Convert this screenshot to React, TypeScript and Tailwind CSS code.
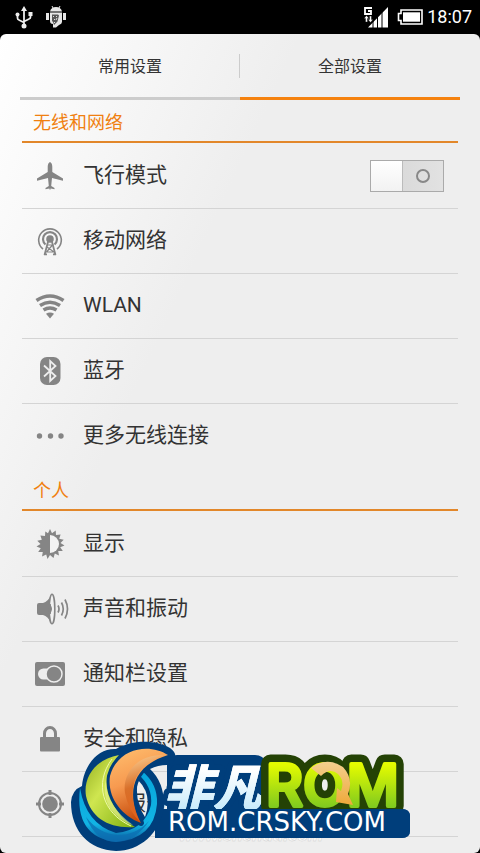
import React from "react";

const Plane = () => (
  <svg viewBox="0 0 32 32" className="size-8" fill="#858585">
    <path d="M16 2q-2.300 1-2.300 5v5L3 18.500v2.300l11-2.800.8 8-3.300 2v1.300l3.800-.8.7 1.800.7-1.800 3.800.8V28l-3.300-2 .8-8 11 2.800v-2.300L18.300 12V7q0-4-2.300-5z" />
  </svg>
);
const Tower = () => (
  <svg viewBox="0 0 32 32" className="size-8" fill="none" stroke="#858585" strokeWidth="2.200">
    <path d="M9 24a11.300 11.300 0 1 1 14 0" strokeWidth="1.600" />
    <path d="M11.500 19.500a7 7 0 1 1 9 0" />
    <circle cx="16" cy="14" r="3.800" fill="#858585" stroke="none" />
    <path d="M14.500 15l-4 15M17.500 15l4 15M10 29.300h3M19 29.300h3" strokeWidth="1.800" />
    <path d="M13.500 20h5l-6 7M13 22l7 5M11 27h10" strokeWidth="1.200" />
  </svg>
);
const Wifi = () => (
  <svg viewBox="0 0 32 32" className="size-8" fill="none" stroke="#858585" strokeWidth="3.600">
    <path d="M2.500 10.500Q16 1.500 29.500 10.500M6 15.500Q16 9 26 15.500M9.500 20Q16 16 22.500 20" />
    <path d="M12 23.800q4-2.500 8 0L16 28.500z" fill="#858585" stroke="none" />
  </svg>
);
const Bluetooth = () => (
  <svg viewBox="0 0 32 32" className="size-8">
    <rect x="6" y="2" width="20.500" height="28" rx="7" fill="#858585" />
    <path d="M10 10.500l11.500 10.500-5.300 5V6l5.300 5L10 21.500" fill="none" stroke="#eee" strokeWidth="1.800" />
  </svg>
);
const Dots = () => (
  <svg viewBox="0 0 32 32" className="size-8" fill="#858585">
    <circle cx="5.500" cy="16" r="2.700" /><circle cx="16.500" cy="16" r="2.700" /><circle cx="27" cy="16" r="2.700" />
  </svg>
);
const Brightness = () => (
  <svg viewBox="0 0 32 32" className="size-8" fill="#858585">
    <path d="M16 1l2 4.200 3.700-2.700.3 4.600 4.600-.700-1.400 4.400 4.500 1-3.200 3.200 4 2.500-4.300 1.700 2.600 3.800-4.600-.1.800 4.600-4.200-2-1.300 4.400L16 27l-2.500 3.900-1.300-4.400-4.200 2 .8-4.600-4.600.1 2.600-3.800-4.300-1.700 4-2.500-3.200-3.200 4.500-1-1.400-4.400 4.600.7.300-4.600L14 5.200z" />
    <path d="M16 7a9 9 0 0 1 0 18z" fill="#f3f3f3" />
  </svg>
);
const Speaker = () => (
  <svg viewBox="0 0 36 32" className="h-8 w-9" fill="none" stroke="#858585">
    <path d="M3 12q0-2 2-2h4q5-1 8.500-9v30q-3.500-8-8.500-9H5q-2 0-2-2z" fill="#858585" stroke="none" />
    <ellipse cx="18" cy="16" rx="2.800" ry="14.800" fill="#f2f2f2" strokeWidth="1.600" />
    <path d="M16 11q3 5 0 10z" fill="#858585" />
    <path d="M24 12.500q2 3.500 0 7M27.500 9.500q3.500 6.500 0 13M31 6.500q5 9.500 0 19" strokeWidth="1.700" />
  </svg>
);
const Panel = () => (
  <svg viewBox="0 0 32 32" className="size-8">
    <rect x="1" y="4" width="30" height="24" rx="2" fill="#858585" />
    <path d="M18 10.500H9.500a5.500 5.500 0 0 0 0 11H18z" fill="#eee" />
    <circle cx="20" cy="16" r="8" fill="#858585" stroke="#eee" strokeWidth="1.500" />
  </svg>
);
const Lock = () => (
  <svg viewBox="0 0 32 32" className="size-8">
    <rect x="6" y="14" width="20" height="14.500" rx="1" fill="#858585" />
    <path d="M10.500 15v-4.500a5.500 6 0 0 1 11 0V15" fill="none" stroke="#858585" strokeWidth="3" />
  </svg>
);
const Target = () => (
  <svg viewBox="0 0 32 32" className="size-8" fill="none" stroke="#858585" strokeWidth="2">
    <circle cx="16" cy="16" r="11" />
    <circle cx="16" cy="16" r="7.800" fill="#858585" stroke="none" />
    <path d="M16 2v5M16 25v5M2 16h5M25 16h5" strokeWidth="3" />
  </svg>
);

type Item = { label: string; Icon: () => React.JSX.Element; toggle?: boolean };

const wireless: Item[] = [
  { label: "飞行模式", Icon: Plane, toggle: true },
  { label: "移动网络", Icon: Tower },
  { label: "WLAN", Icon: Wifi },
  { label: "蓝牙", Icon: Bluetooth },
  { label: "更多无线连接", Icon: Dots },
];
const personal: Item[] = [
  { label: "显示", Icon: Brightness },
  { label: "声音和振动", Icon: Speaker },
  { label: "通知栏设置", Icon: Panel },
  { label: "安全和隐私", Icon: Lock },
  { label: "定位服务", Icon: Target },
];

function Section({ title, items, closed }: { title: string; items: Item[]; closed?: boolean }) {
  return (
    <section className="mx-0.5">
      <h2 className="flex h-[43px] items-center border-b-2 border-[#e2872a] pt-1 pl-[11px] text-lg text-[#f08010]">{title}</h2>
      <ul className="pt-px">
        {items.map(({ label, Icon, toggle }, i) => (
          <li key={label} className={closed || i < items.length - 1 ? "border-b border-[#d4d4d4]" : ""}>
            {toggle ? (
              <label className="flex h-16 items-center pr-3.5 pl-3">
                <span className="flex w-[49px]"><Icon /></span>
                <span className="flex-1 text-[21px]">{label}</span>
                <input type="checkbox" className="peer sr-only" />
                <span className="flex h-8 w-[74px] border border-[#aaa] bg-linear-to-r from-[#d4d4d4] to-[#e2e2e2]">
                  <span className="w-8 border-r border-[#bbb] bg-linear-to-b from-white to-[#f2f2f2]" />
                  <span className="flex flex-1 items-center justify-center">
                    <span className="size-3.5 rounded-full border-2 border-[#888]" />
                  </span>
                </span>
              </label>
            ) : (
              <button type="button" className="flex h-16 w-full items-center pl-3 text-left">
                <span className="flex w-[49px]"><Icon /></span>
                <span className="text-[21px]">{label}</span>
              </button>
            )}
          </li>
        ))}
      </ul>
    </section>
  );
}

function StatusBar() {
  return (
    <header className="flex h-[34px] shrink-0 items-center bg-black pr-2 pl-3 text-white">
      <svg viewBox="0 0 24 24" className="size-6" fill="none" stroke="#eee" strokeWidth="1.800">
        <path d="M12 4v17M5.500 10v3q0 1.500 1.500 2l5 2.500M18.500 9.500V12q0 1.500-1.500 2l-5 2.500" />
        <path d="M12 1l3 5H9z" fill="#eee" stroke="none" />
        <circle cx="12" cy="21" r="2.500" fill="#eee" stroke="none" />
        <circle cx="5.500" cy="9.500" r="2" fill="#eee" stroke="none" />
        <path d="M16.500 7h4v4h-4z" fill="#eee" stroke="none" />
      </svg>
      <svg viewBox="0 0 24 24" className="ml-2 size-6" fill="#e6e6e6">
        <path d="M6 6.500q1-4.500 6-4.500t6 4.500zM6 7.500h12V17q0 2-3 3l-3 2.500H9V19q-3 0-3-3zM2 8h3v7H2zM19 8h3v7h-3z" />
        <path d="M8 1l1.500 3M16 1l-1.500 3" stroke="#e6e6e6" />
        <path d="M8 9.500h6l1 1-1.500 6L10 20l-1-3-1-1z" fill="#555" />
        <path d="M9 11l1 1M12 11l1 1M10 14l1 1M13 13l-1 2M11 17l-1 1" stroke="#ddd" />
      </svg>
      <div className="ml-auto flex items-center">
        <svg viewBox="0 0 26 22" className="h-[22px] w-[26px]" fill="#fff">
          <path d="M9 2H2v6h6V5H5" fill="none" stroke="#fff" strokeWidth="1.800" />
          <path d="M5 21.500L25 1v20.500z" />
          <path d="M10 9v13M14.500 8v14M19 3v19" stroke="#000" />
          <path d="M3.500 9.500L6 12.500H4.500V16h-2v-3.500H1zM6.500 10h2v3.500H10l-2.500 3-2.500-3h1.500z" stroke="#000" strokeWidth=".4" />
        </svg>
        <svg viewBox="0 0 26 16" className="ml-2 h-4 w-[26px]">
          <path d="M4 1h21v14H4v-3.500H1.500v-7H4z" fill="none" stroke="#fff" strokeWidth="1.600" />
          <path d="M6 3.300h17v9.400H6z" fill="#fff" />
        </svg>
        <time className="ml-1 font-[Roboto] text-lg">18:07</time>
      </div>
    </header>
  );
}

function Logo() {
  return (
    <svg viewBox="0 0 340 114" className="absolute bottom-0 left-[71px] h-[114px] w-[340px]" role="img" aria-label="非凡ROM">
      <defs>
        <linearGradient id="lime" x2="1" y2="1"><stop stopColor="#93ae20" /><stop offset=".4" stopColor="#cfe650" /><stop offset="1" stopColor="#7fb010" /></linearGradient>
        <linearGradient id="orange" x2=".3" y2="1"><stop stopColor="#ffc070" /><stop offset=".5" stopColor="#f79a50" /><stop offset="1" stopColor="#c64c0c" /></linearGradient>
        <linearGradient id="inner" x2=".2" y2="1"><stop stopColor="#ffd79a" /><stop offset=".5" stopColor="#d9702a" /><stop offset="1" stopColor="#e0601a" /></linearGradient>
        <linearGradient id="blue" x2="0" y2="1"><stop stopColor="#06a5dc" /><stop offset=".75" stopColor="#12b4e4" /><stop offset="1" stopColor="#0c5a9c" /></linearGradient>
        <linearGradient id="green" x2="0" y2="1"><stop offset=".2" stopColor="#e4fb00" /><stop offset="1" stopColor="#62bb28" /></linearGradient>
        <linearGradient id="ice" x2="0" y2="1"><stop offset=".3" stopColor="#fff" /><stop offset="1" stopColor="#b9e5fa" /></linearGradient>
        <linearGradient id="gold" x2="0" y2="1"><stop stopColor="#f3cf8e" /><stop offset="1" stopColor="#efa93a" /></linearGradient>
      </defs>
      <text x="108" y="102" fontSize="17" fill="#fafafa" stroke="#ccc" strokeWidth=".4" fontStyle="italic" fontFamily="Liberation Sans, sans-serif" fontWeight="700">www.shendu.com</text>
      <path d="M84 70h12V22q2-6 10-6h78q8 0 12 8v46h135q8 0 8 7v15q0 7-8 7H84z" fill="#003e7b" />
      <path fillRule="evenodd" d="M0 63Q1 51 11 47C13 26 27 9 45 10 60 1 84 0 99 9q7 5 5 11-2 6-8 6-9 0-17 4Q93 43 93 66C90 95 68 112 45 112 18 111 0 92 0 63zM67 41Q82 56 74 78 63 62 67 41z" fill="#003e7b" />
      <path d="M9 49Q15 85 45 94 74 91 80 66 82 48 67 35q2-4 4-3 16 13 15 33-3 35-41 38Q3 98 9 49z" fill="url(#blue)" />
      <path d="M15 78q13 17 32 18 18 0 31-14-12 19-33 21-20 0-30-25z" fill="#0c6fb2" fillOpacity=".75" />
      <path d="M48 16C24 20 12 39 15 57c5 22 23 33 49 31C42 76 26 44 48 16z" fill="url(#lime)" />
      <path d="M41 20C23 44 31 74 60 87" fill="none" stroke="#eefaaa" strokeWidth="1" />
      <path d="M35 40q-1 26 27 46-13-3-24-18-7-14-3-28z" fill="#eef6a0" fillOpacity=".55" />
      <path d="M97 16C79 4 47 8 39 37c-3 20 10 39 31 47C56 58 58 28 97 16z" fill="url(#orange)" stroke="#003e7b" strokeWidth="6" paintOrder="stroke" strokeLinejoin="round" />
      <path d="M93 16C66 15 51 35 54 54q3 17 15 29C56 58 58 28 93 16z" fill="url(#inner)" />
      <g fontFamily="Noto Sans CJK SC, sans-serif" fontWeight="900" fontStyle="italic" fontSize="49" strokeLinejoin="round">
        <text x="93" y="67" fill="url(#ice)" stroke="#003e7b" strokeWidth="11" paintOrder="stroke">非凡</text>
        <text x="93" y="67" fill="url(#ice)">非凡</text>
      </g>
      <g fontFamily="Inter, sans-serif" fontWeight="500" fontSize="57" strokeLinejoin="round">
        <text x="195" y="67" fill="#244205" stroke="#244205" strokeWidth="19">ROM</text>
        <text x="195" y="67" fill="url(#green)" stroke="url(#green)" strokeWidth="4">ROM</text>
      </g>
      <path d="M240 29q16-12 32-1 11 12 5 27l5 11-17-3 1-14 4 3q4-10-3-17-8-7-17 2z" fill="url(#gold)" />
      <path d="M100 70h230q9 0 9 8v13q0 8-9 8H100z" fill="#003e7b" />
      <text x="97" y="92" fill="#fff" fontFamily="DejaVu Sans, sans-serif" fontSize="26">ROM.CRSKY.COM</text>
    </svg>
  );
}

export default function App() {
  return (
    <div className="relative flex h-screen flex-col overflow-hidden bg-black font-['Roboto','Noto_Sans_CJK_SC',sans-serif] text-[#333]">
      <StatusBar />
      <main className="min-h-0 flex-1 overflow-hidden rounded-md bg-[#eee] bg-linear-[115deg] from-white to-[#eee] to-35% px-5">
        <nav className="flex h-[66px]">
          <button type="button" className="relative flex-1 border-b-[3px] border-[#ccc] pt-0.5 text-base">常用设置
            <span className="absolute top-5 right-0 h-6 w-px bg-[#ccc]" />
          </button>
          <button type="button" className="flex-1 border-b-[3px] border-[#f5820f] pt-0.5 text-base">全部设置</button>
        </nav>
        <Section title="无线和网络" items={wireless} />
        <Section title="个人" items={personal} closed />
      </main>
      <Logo />
    </div>
  );
}
